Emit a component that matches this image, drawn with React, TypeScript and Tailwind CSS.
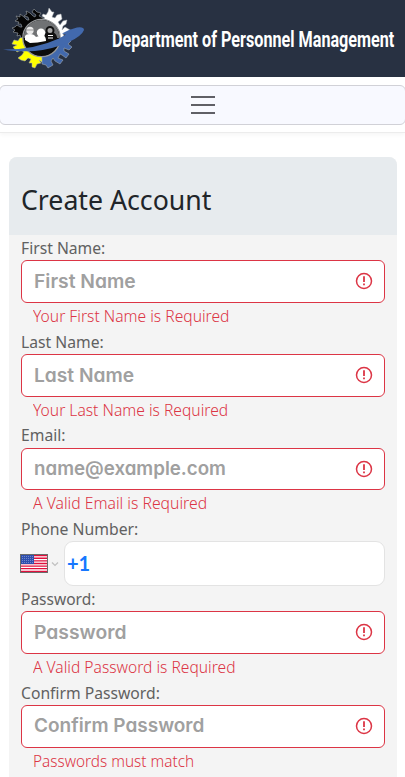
import React from "react";

function Logo() {
  return (
    <svg className="block h-[77px] w-[100px] shrink-0" viewBox="0 0 100 77">
      <g stroke="#aeb4b8" strokeWidth="0.5">
        <path fill="#050505" d="M42 38L21 38 20 35 17 36 18 33 13 32 15 30 12 28 15 27 17 25 20 27 22 27 21 24 18 24 19 22 15 21 18 19 16 16 20 17 20 14 24 17 27 20 29 20 28 17 24 16 27 14 26 11 30 13 33 16 35 17 36 15 32 12 34 9 37 12 41 13 39 16 43 18Z" />
        <path fill="#fff" d="M42 38V20L45 18 42 16 43 14 46 15 48 12 49 8 52 12 54 12 52 17 55 18 57 15 61 14 62 19 58 22 60 25 63 21 67 20 66 24 63 26 62 30 65 27 70 30 73 31 68 34 63 34 65 38Z" />
        <path fill="#ff0" d="M42 36V62L39 60 41 63 37 64 35 68 32 67 32 63 29 63 31 59 28 58 25 61 21 60 18 58 22 55 24 52 21 50 17 52 13 47 17 45 12 44 14 40 18 41 20 38Z" />
        <path fill="#4269ad" d="M42 38H67L71 41 68 44 72 47 69 50 64 48 64 51 69 54 66 58 62 55 60 54 58 58 63 60 60 64 55 61 53 58 51 61 53 65 48 68 46 65 42 64Z" />
      </g>
      <circle cx="41.5" cy="38" r="18.7" fill="#0c0c0c" stroke="#96989a" strokeWidth="1.3" />
      <path d="M23.5 38a18 18 0 0 1 36 0z" fill="#707274" />
      <path d="M45 38v-4q1-2 5-2 6 0 7 5v3H45z" fill="#111" />
      <path d="M48 35.5h5M48 38h5" stroke="#fff" />
      <path d="M25 40v-4q1-2 5-2t6 3q5-2 8-1 2 1 2 5-9 2-16 2z" fill="#fff" />
      <circle cx="30" cy="30.5" r="3.7" fill="#e9e9e9" />
      <path d="M26 30h8" stroke="#777" strokeWidth=".7" />
      <circle cx="41" cy="32.8" r="4.2" fill="#fff" />
      <circle cx="50" cy="30.5" r="3.5" fill="#aaa" stroke="#111" strokeWidth="2" />
      <path d="M3 49.5Q34 50 59 38.5L66 34.5 62 33.5Q70 29 77 27.5 84 26.5 84 30 82 36 68 42.5 50 50 35 51 15 52 3 49.5Z" fill="#4269ad" />
    </svg>
  );
}

function ErrorIcon() {
  return (
    <svg className="-mt-px size-[18px]" viewBox="0 0 18 18" fill="none" stroke="#dc3545">
      <circle cx="9" cy="9" r="7.5" strokeWidth="1.5" />
      <path d="M9 4.3v5.8M9 11.6v1.7" strokeWidth="1.8" />
    </svg>
  );
}

function Label({ text, fit }: { text: string; fit: string }) {
  return (
    <div className="h-[25.4px] text-[16px] leading-[26px] text-[#616161]">
      <span className={`inline-block origin-left whitespace-nowrap ${fit}`}>{text}</span>
    </div>
  );
}

type FieldProps = { label: string; hint: string; error: string; labelFit: string; hintFit: string; errorFit: string };

function Field({ label, hint, error, labelFit, hintFit, errorFit }: FieldProps) {
  return (
    <div className="h-[93.67px]">
      <Label text={label} fit={labelFit} />
      <div className="flex h-[42.6px] items-center justify-between rounded-md border border-[#dc3545] bg-white pr-[11px] pl-3 font-[Inter,sans-serif] text-[19px] font-semibold text-[#a0a0a0] [font-feature-settings:'cv11']">
        <span className={`mt-px inline-block origin-left whitespace-nowrap ${hintFit}`}>{hint}</span>
        <ErrorIcon />
      </div>
      <div className="pl-3 text-[16px] leading-[26px] font-light text-[#dc3545]">
        <span className={`inline-block origin-left whitespace-nowrap ${errorFit}`}>{error}</span>
      </div>
    </div>
  );
}

function Flag() {
  return (
    <svg className="h-[19px] w-[28px]" viewBox="0 0 28 19">
      <rect width="28" height="19" fill="#6b6b6b" />
      <rect x="1" y="1" width="26" height="17" fill="#fff" />
      <path d="M1 1.65h26M1 4.27h26M1 6.88h26M1 9.5h26M1 12.1h26M1 14.7h26M1 17.3h26" stroke="#e0103c" strokeWidth="1.31" />
      <rect x="1" y="1" width="13" height="9" fill="#2e4fae" />
      <path d="M2 2.5h11M2 4.5h11M2 6.5h11M2 8.5h11" stroke="#7187c8" strokeWidth="1" strokeDasharray="1 1" />
    </svg>
  );
}

export default function App() {
  return (
    <div className="h-[777px] w-full overflow-hidden bg-white font-['Noto_Sans',sans-serif]">
      <header className="flex h-[77px] items-center bg-[#283142]">
        <Logo />
        <h1 className="mt-px ml-3 w-[284px] origin-left scale-x-[.735] whitespace-nowrap font-[Roboto,sans-serif] text-[22px] font-bold text-white">Department of Personnel Management</h1>
      </header>
      <nav className="h-[56px] border-b border-[#ececec] pt-2 shadow-[0_2px_4px_rgba(0,0,0,.04)]">
        <button className="-mx-px flex h-10 w-[407px] items-center justify-center rounded-md border border-[#d1d1d7] bg-[#f8f9ff]">
          <span className="flex h-[18px] w-6 flex-col justify-between">
            <i className="h-[2px] bg-[#606066]" />
            <i className="h-[2px] bg-[#606066]" />
            <i className="h-[2px] bg-[#606066]" />
          </span>
        </button>
      </nav>
      <main className="mx-2 mt-6 ml-[9px] h-[640px] overflow-hidden rounded-t-lg bg-[#f4f4f4]">
        <div className="flex h-[78px] items-center bg-[#e7ebee] px-3 pt-[5px] text-[28px] text-[#212529]">
          <h2 className="origin-left scale-x-[.953] whitespace-nowrap">Create Account</h2>
        </div>
        <form className="px-3">
          <Field label="First Name:" hint="First Name" error="Your First Name is Required" labelFit="scale-x-[.98]" hintFit="scale-x-[1.015]" errorFit="scale-x-[.977]" />
          <Field label="Last Name:" hint="Last Name" error="Your Last Name is Required" labelFit="scale-x-[.98]" hintFit="scale-x-[1.01]" errorFit="scale-x-[.977]" />
          <Field label="Email:" hint="name@example.com" error="A Valid Email is Required" labelFit="scale-x-[.98]" hintFit="scale-x-[.985]" errorFit="scale-x-[.983]" />
          <Label text="Phone Number:" fit="scale-x-[.985]" />
          <div className="-ml-px flex h-[44.5px] items-center">
            <Flag />
            <svg className="ml-[3px] h-2 w-2" viewBox="0 0 8 8" fill="none" stroke="#c0c0c0" strokeWidth="1.2"><path d="M1 2.5l3 3 3-3" /></svg>
            <div className="ml-[5px] flex h-full flex-1 items-center rounded-[9px] border border-[#e3e3e3] bg-white pb-[2px] pl-[2px] font-[Lato,sans-serif] text-[20px] font-bold text-[#1677ff]">+1</div>
          </div>
          <Field label="Password:" hint="Password" error="A Valid Password is Required" labelFit="scale-x-[.97]" hintFit="scale-x-[1.015]" errorFit="scale-x-[.975]" />
          <Field label="Confirm Password:" hint="Confirm Password" error="Passwords must match" labelFit="scale-x-[.98]" hintFit="scale-x-100" errorFit="scale-x-[.96]" />
        </form>
      </main>
    </div>
  );
}
